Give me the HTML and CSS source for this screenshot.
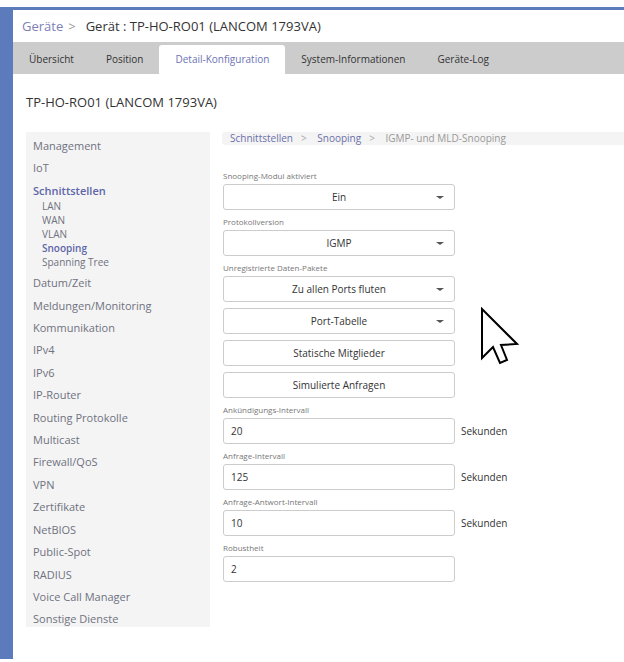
FILE: index.html
```html
<!DOCTYPE html>
<html lang="de">
<head>
    <meta charset="UTF-8">
    <meta name="viewport" content="width=device-width, initial-scale=1.0">
    <title>Gerät : TP-HO-RO01 (LANCOM 1793VA)</title>
    <link rel="stylesheet" href="styles.css">
</head>
<body>
    <div class="frame">
        <div class="page-head">
            <a class="crumb-link" href="#">Geräte</a><span class="crumb-sep">&gt;</span>
            <span class="page-name">Gerät : TP-HO-RO01 (LANCOM 1793VA)</span>
        </div>
        <div class="tabs">
            <div class="tab">Übersicht</div>
            <div class="tab">Position</div>
            <div class="tab active">Detail-Konfiguration</div>
            <div class="tab">System-Informationen</div>
            <div class="tab">Geräte-Log</div>
        </div>

        <h1 class="device-title">TP-HO-RO01 (LANCOM 1793VA)</h1>

        <div class="content">
            <ul class="menu">
                <li>Management</li>
                <li>IoT</li>
                <li class="open">Schnittstellen
                    <ul class="submenu">
                        <li>LAN</li>
                        <li>WAN</li>
                        <li>VLAN</li>
                        <li class="current">Snooping</li>
                        <li>Spanning Tree</li>
                    </ul>
                </li>
                <li>Datum/Zeit</li>
                <li>Meldungen/Monitoring</li>
                <li>Kommunikation</li>
                <li>IPv4</li>
                <li>IPv6</li>
                <li>IP-Router</li>
                <li>Routing Protokolle</li>
                <li>Multicast</li>
                <li>Firewall/QoS</li>
                <li>VPN</li>
                <li>Zertifikate</li>
                <li>NetBIOS</li>
                <li>Public-Spot</li>
                <li>RADIUS</li>
                <li>Voice Call Manager</li>
                <li>Sonstige Dienste</li>
            </ul>

            <div class="config">
                <div class="breadcrumb">
                    <span class="bc-link">Schnittstellen</span><span class="bc-sep">&gt;</span>
                    <span class="bc-link">Snooping</span><span class="bc-sep">&gt;</span>
                    <span class="bc-current">IGMP- und MLD-Snooping</span>
                </div>

                <div class="form">
                    <div class="field">
                        <label>Snooping-Modul aktiviert</label>
                        <div class="select">Ein<span class="caret"></span></div>
                    </div>
                    <div class="field">
                        <label>Protokollversion</label>
                        <div class="select">IGMP<span class="caret"></span></div>
                    </div>
                    <div class="field">
                        <label>Unregistrierte Daten-Pakete</label>
                        <div class="select">Zu allen Ports fluten<span class="caret"></span></div>
                    </div>
                    <div class="field">
                        <div class="select">Port-Tabelle<span class="caret"></span></div>
                    </div>
                    <div class="field">
                        <div class="button">Statische Mitglieder</div>
                    </div>
                    <div class="field">
                        <div class="button">Simulierte Anfragen</div>
                    </div>
                    <div class="field">
                        <label>Ankündigungs-Intervall</label>
                        <div class="row">
                            <input type="text" value="20"><span class="unit">Sekunden</span>
                        </div>
                    </div>
                    <div class="field">
                        <label>Anfrage-Intervall</label>
                        <div class="row">
                            <input type="text" value="125"><span class="unit">Sekunden</span>
                        </div>
                    </div>
                    <div class="field">
                        <label>Anfrage-Antwort-Intervall</label>
                        <div class="row">
                            <input type="text" value="10"><span class="unit">Sekunden</span>
                        </div>
                    </div>
                    <div class="field">
                        <label>Robustheit</label>
                        <div class="row">
                            <input type="text" value="2">
                        </div>
                    </div>
                </div>
            </div>
        </div>

        <!-- mouse pointer over the form -->
        <svg class="pointer" width="40" height="60" viewBox="0 0 40 60">
            <path d="M2 2 L2 51 L13 40 L20 56 L27 53 L21 38 L37 37 Z"
                  fill="#fff" stroke="#000" stroke-width="2" stroke-linejoin="miter"/>
        </svg>
    </div>
</body>
</html>
```

FILE: styles.css
```css
body {
    margin: 0;
    padding-top: 7px;
    font-family: "Open Sans", Arial, sans-serif;
    color: #444;
    background: #fff;
}
.frame {
    position: relative;
    border-top: 3px solid #5b7bbd;
    border-left: 13px solid #5b7bbd;
    height: 652px;
    box-sizing: border-box;
}
.page-head {
    height: 32px;
    display: flex;
    align-items: center;
    padding-left: 9px;
    font-size: 13px;
}
.crumb-link {
    color: #7c80b6;
    text-decoration: none;
}
.crumb-sep {
    color: #999;
    margin: 0 10px 0 5px;
}
.page-name {
    color: #333;
}
.tabs {
    display: flex;
    align-items: flex-end;
    height: 32px;
    background: #cccccc;
    box-sizing: border-box;
    padding-top: 3px;
}
.tab {
    height: 29px;
    line-height: 29px;
    padding: 0 16px;
    font-size: 10px;
    color: #333;
}
.tab.active {
    background: #fff;
    color: #6c73b4;
    border-radius: 3px 3px 0 0;
}
.device-title {
    margin: 0;
    padding: 19px 0 0 13px;
    height: 39px;
    font-size: 13px;
    font-weight: normal;
    color: #333;
}
.content {
    display: flex;
    gap: 12px;
    padding-left: 13px;
}
.menu {
    list-style: none;
    margin: 0;
    padding: 3px 0 0 7px;
    width: 184px;
    height: 495px;
    box-sizing: border-box;
    background: #f4f4f4;
    font-size: 11px;
    color: #6f7280;
    overflow: hidden;
}
.menu > li {
    line-height: 22.4px;
}
.menu li.open {
    color: #5d66a8;
    font-weight: 600;
}
.submenu {
    list-style: none;
    margin: -3px 0 3px 9px;
    padding: 0;
}
.submenu li {
    line-height: 14px;
    font-size: 10px;
    font-weight: normal;
    color: #6f7280;
}
.submenu li.current {
    color: #5d66a8;
    font-weight: 600;
}
.config {
    flex: 1;
}
.breadcrumb {
    height: 13px;
    line-height: 13px;
    background: #f4f4f4;
    border-radius: 3px 0 0 3px;
    padding-left: 8px;
    font-size: 10px;
}
.bc-link {
    color: #6a70aa;
}
.bc-sep {
    color: #aaa;
    margin: 0 8px 0 8px;
}
.bc-current {
    color: #999;
}
.form {
    margin-top: 25px;
    padding-left: 1px;
    width: 232px;
}
.field {
    margin-bottom: 6px;
}
.field label {
    display: block;
    font-size: 8px;
    line-height: 12px;
    margin-bottom: 2px;
    color: #777;
    white-space: nowrap;
}
.select, .button {
    position: relative;
    height: 26px;
    line-height: 24px;
    box-sizing: border-box;
    border: 1px solid #ccc;
    border-radius: 3px;
    text-align: center;
    font-size: 10px;
    color: #333;
    background: #fff;
}
.caret {
    position: absolute;
    right: 10px;
    top: 11px;
    width: 0;
    height: 0;
    border-left: 4px solid transparent;
    border-right: 4px solid transparent;
    border-top: 3px solid #555;
}
.row {
    display: flex;
    align-items: center;
}
.row input {
    flex: none;
    width: 232px;
    height: 26px;
    box-sizing: border-box;
    border: 1px solid #ccc;
    border-radius: 3px;
    padding: 0 7px;
    font-family: inherit;
    font-size: 10px;
    color: #333;
}
.unit {
    margin-left: 6px;
    font-size: 10px;
    color: #333;
    white-space: nowrap;
}
.pointer {
    position: absolute;
    left: 467px;
    top: 297px;
}
```
